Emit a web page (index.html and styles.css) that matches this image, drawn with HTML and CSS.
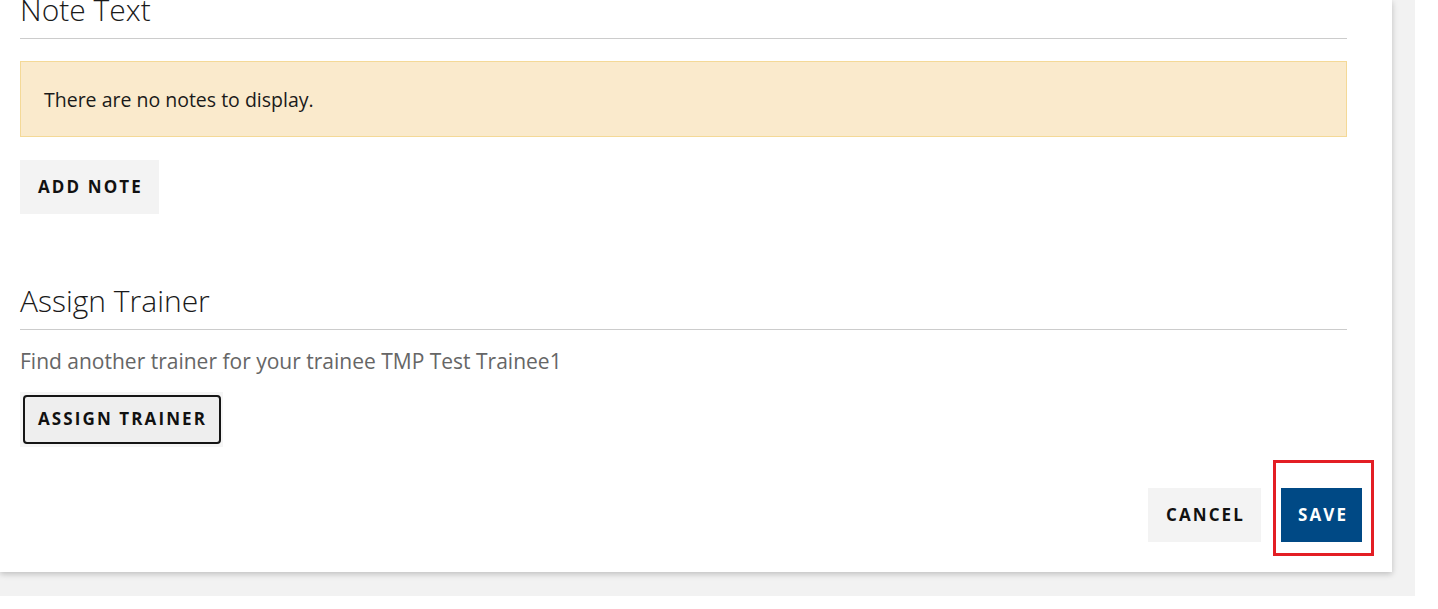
FILE: index.html
```html
<!DOCTYPE html>
<html lang="en">
<head>
<meta charset="utf-8">
<title>Trainee notes</title>
<link rel="stylesheet" href="styles.css">
</head>
<body>
<div class="page">
  <div class="card">
    <div class="content">
      <h2 class="section-title first">Note Text</h2>
      <div class="alert">There are no notes to display.</div>
      <button class="btn btn-light add-note">ADD NOTE</button>

      <h2 class="section-title assign">Assign Trainer</h2>
      <p class="hint">Find another trainer for your trainee TMP Test Trainee1</p>
      <button class="btn btn-focus">ASSIGN TRAINER</button>
    </div>
    <div class="footer">
      <button class="btn btn-light">CANCEL</button>
      <span class="highlight"><button class="btn btn-primary">SAVE</button></span>
    </div>
  </div>
</div>
</body>
</html>
```

FILE: styles.css
```css
* { box-sizing: border-box; }
html, body { margin: 0; padding: 0; background: #fff; }
body { font-family: "Open Sans", "Liberation Sans", sans-serif; color: #222; }

.page {
  width: 1415px;
  height: 596px;
  background: #f2f2f2;
  overflow: hidden;
}
.card {
  width: 1392px;
  height: 572px;
  background: #fff;
  box-shadow: 0 2px 6px rgba(0,0,0,0.22);
  display: flex;
  flex-direction: column;
}
.content {
  padding: 0 45px 0 20px;
  display: flex;
  flex-direction: column;
  align-items: flex-start;
}
.section-title {
  align-self: stretch;
  margin: 0;
  font-weight: 300;
  font-size: 30px;
  line-height: 40px;
  padding-bottom: 8px;
  border-bottom: 1px solid #cccccc;
  color: #1a1a1a;
}
.section-title.first { margin-top: -10px; }
.section-title.assign { margin-top: 67px; }

.alert {
  align-self: stretch;
  margin-top: 22px;
  background: #faeacc;
  border: 1px solid #f4d997;
  padding: 25px 23px 23px;
  font-size: 19.5px;
  line-height: 26px;
  color: #1a1a1a;
}
.btn {
  font-family: "Open Sans", "Liberation Sans", sans-serif;
  font-weight: 700;
  font-size: 17px;
  letter-spacing: 2.1px;
  border: 0;
  cursor: pointer;
  color: #111;
  padding: 0 16px 2px 18px;
  height: 54px;
}
.btn-light { background: #f3f3f3; }
.add-note { margin-top: 23px; }
.hint {
  margin: 17px 0 0;
  font-size: 21px;
  line-height: 28px;
  color: #666;
}
.btn-focus {
  position: relative;
  margin-top: 17px;
  height: 55px;
  background: #eeeeee;
  box-shadow: inset 0 0 0 3px #f5f5f5;
}
.btn-focus::after {
  content: "";
  position: absolute;
  top: 3px;
  left: 3px;
  right: 2px;
  bottom: 3px;
  border: 2.5px solid #151515;
  border-radius: 4px;
}
.footer {
  margin-top: 41px;
  display: flex;
  justify-content: flex-end;
  gap: 20px;
  padding-right: 30px;
}
.highlight {
  position: relative;
  display: flex;
}
.highlight::after {
  content: "";
  position: absolute;
  top: -28px;
  left: -8px;
  right: -12px;
  bottom: -14px;
  border: 3px solid #e31e24;
  pointer-events: none;
}
.btn-primary {
  background: #004985;
  color: #fff;
  padding: 0 14px 2px 17px;
}
```
